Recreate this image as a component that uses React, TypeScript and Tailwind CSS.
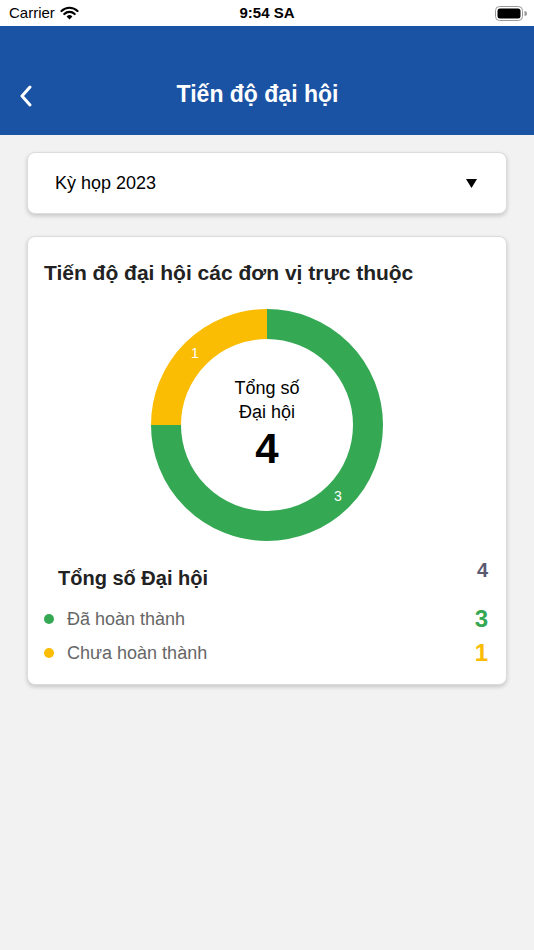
import React from 'react';

const font = { fontFamily: '"Liberation Sans", Arial, sans-serif' };

function StatusBar() {
  return (
    <div className="relative flex h-[26px] items-center justify-between bg-white px-[9px] text-[15px] text-black">
      <div className="flex items-center gap-[5px]">
        <span>Carrier</span>
        <svg width="19" height="14" viewBox="0 0 19 14">
          <path d="M9.5 13.5 L6.6 10.4 A4.2 4.2 0 0 1 12.4 10.4 Z" fill="#000" />
          <path d="M4.3 8 A7.5 7.5 0 0 1 14.7 8" stroke="#000" strokeWidth="2.2" fill="none" strokeLinecap="round" />
          <path d="M1.5 5 A11.5 11.5 0 0 1 17.5 5" stroke="#000" strokeWidth="2.2" fill="none" strokeLinecap="round" />
        </svg>
      </div>
      <span className="absolute left-1/2 -translate-x-1/2 font-bold">9:54 SA</span>
      <svg width="32" height="15" viewBox="0 0 32 15" className="mr-[-2px]">
        <rect x="0.5" y="0.5" width="27" height="14" rx="4" fill="none" stroke="#999" />
        <rect x="2.5" y="2.5" width="23" height="10" rx="2.5" fill="#000" />
        <path d="M29.5 5 A2 2 0 0 1 29.5 10 Z" fill="#999" />
      </svg>
    </div>
  );
}

function Donut() {
  return (
    <div className="relative h-[232px] w-[232px]">
      <svg width="232" height="232" viewBox="0 0 232 232" className="absolute inset-0">
        <path d="M116 15 A101 101 0 1 1 15 116" stroke="#35a853" strokeWidth="30" fill="none" />
        <path d="M15 116 A101 101 0 0 1 116 15" stroke="#fbbc04" strokeWidth="30" fill="none" />
        <text x="44" y="49" fill="#fff" fontSize="14" textAnchor="middle" style={font}>1</text>
        <text x="187" y="192" fill="#fff" fontSize="14" textAnchor="middle" style={font}>3</text>
      </svg>
      <div className="absolute inset-0 flex flex-col items-center justify-center pb-[2px] text-black">
        <span className="text-[18px] leading-[24px]">Tổng số</span>
        <span className="text-[18px] leading-[24px]">Đại hội</span>
        <span className="mt-[2px] text-[42px] font-bold leading-[46px]">4</span>
      </div>
    </div>
  );
}

export default function App() {
  return (
    <div className="min-h-[950px] bg-[#f2f2f2]" style={font}>
      <StatusBar />
      <div className="relative flex h-[109px] items-center justify-center bg-[#1a52a4]">
        <svg width="14" height="22" viewBox="0 0 14 22" className="absolute left-[19px] top-[59px]">
          <path d="M11 2 L3 11 L11 20" stroke="#fff" strokeWidth="3" fill="none" strokeLinecap="round" strokeLinejoin="round" />
        </svg>
        <h1 className="mr-[19px] mt-[28px] text-[23px] font-bold text-white">Tiến độ đại hội</h1>
      </div>

      <div className="flex flex-col gap-[22px] px-[27px] pt-[17px]">
        <div className="flex h-[62px] items-center justify-between rounded-[8px] border border-[#dcdcdc] bg-white pl-[27px] pr-[29px] shadow-[0_2px_4px_rgba(0,0,0,0.18)]">
          <span className="text-[18px] text-black">Kỳ họp 2023</span>
          <svg width="11" height="9" viewBox="0 0 11 9">
            <path d="M0 0 L11 0 L5.5 9 Z" fill="#000" />
          </svg>
        </div>

        <div className="flex flex-col rounded-[8px] border border-[#dcdcdc] bg-white pb-[19px] pl-[17px] pr-[17px] pt-[23px] shadow-[0_2px_4px_rgba(0,0,0,0.18)]">
          <h2 className="ml-[-1px] text-[21px] font-bold leading-[26px] text-[#222]">Tiến độ đại hội các đơn vị trực thuộc</h2>
          <div className="mt-[23px] flex justify-center">
            <Donut />
          </div>
          <div className="mt-[22px] flex items-start justify-between pr-[1px]">
            <span className="pl-[13px] pt-[2px] text-[20px] font-bold leading-[26px] text-[#222]">Tổng số Đại hội</span>
            <span className="mt-[-4px] text-[20px] font-bold leading-[22px] text-[#5b5872]">4</span>
          </div>
          <div className="mt-[16px] flex flex-col gap-[10px] pr-[1px]">
            <div className="flex items-center justify-between">
              <div className="ml-[-1px] flex items-center gap-[13px]">
                <span className="h-[10px] w-[10px] rounded-full bg-[#35a853]" />
                <span className="text-[18px] leading-[24px] text-[#666]">Đã hoàn thành</span>
              </div>
              <span className="text-[24px] font-bold leading-[24px] text-[#35a853]">3</span>
            </div>
            <div className="flex items-center justify-between">
              <div className="ml-[-1px] flex items-center gap-[13px]">
                <span className="h-[10px] w-[10px] rounded-full bg-[#fbbc04]" />
                <span className="text-[18px] leading-[24px] text-[#666]">Chưa hoàn thành</span>
              </div>
              <span className="text-[24px] font-bold leading-[24px] text-[#fbbc04]">1</span>
            </div>
          </div>
        </div>
      </div>
    </div>
  );
}
